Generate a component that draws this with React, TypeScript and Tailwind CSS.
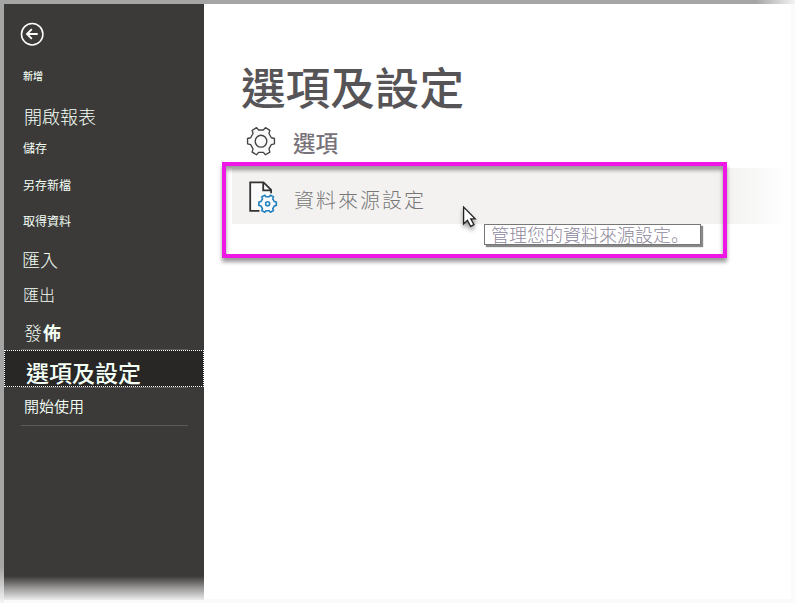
const gear =
  'M10.2 1.5 L12.2 3.7 H16.8 L18.8 1.5 L23.1 4 L22.2 7 L24.5 11 L27.5 11.7 V16.7 L24.5 17.4 L22.2 21.4 L23.1 24.4 L18.8 26.9 L16.8 24.7 H12.2 L10.2 26.9 L5.9 24.4 L6.8 21.4 L4.5 17.4 L1.5 16.7 V11.7 L4.5 11 L6.8 7 L5.9 4 Z';

function BackIcon() {
  return (
    <svg width="24" height="24" viewBox="0 0 24 24" fill="none" stroke="#fff">
      <circle cx="12.2" cy="12.2" r="10.7" strokeWidth="1.5" />
      <path d="M17.7 12H7.5M11.8 7.2L7 12l4.8 4.8" strokeWidth="1.9" />
    </svg>
  );
}

function GearIcon() {
  return (
    <svg width="30" height="31" viewBox="0 0 29 29" preserveAspectRatio="none" fill="#fafafa" stroke="#444" strokeWidth="1.3" strokeLinejoin="round">
      <path d={gear} />
      <circle cx="14.5" cy="14.2" r="5.6" />
    </svg>
  );
}

function FileGearIcon() {
  return (
    <svg width="30" height="33" viewBox="0 0 30 33" fill="none">
      <path d="M12 30.8H2.2V2.3h13.5l8 8v4.5" fill="#fafafa" />
      <path d="M11.5 30.8H2.2V2.3h13.3l7.6 7.6v3.4M15.2 2.5v7.8h8" stroke="#333" strokeWidth="1.8" />
      <g transform="translate(9.9 14.2) scale(.67)" stroke="#2080bd" strokeWidth="2.4" fill="#fafafa">
        <path d={gear} />
        <circle cx="14.5" cy="14.2" r="3" />
      </g>
    </svg>
  );
}

function Sidebar() {
  return (
    <nav className="flex h-[596px] w-[200px] shrink-0 flex-col bg-[#3b3a38] text-[#f4fff6]">
      <div className="mt-[18px] ml-4 h-6">
        <BackIcon />
      </div>
      <div className="flex flex-col pl-5 leading-6 whitespace-nowrap">
        <div className="mt-[18px] -ml-px h-6 text-[10px] font-medium">新增</div>
        <div className="mt-[16px] h-6 text-[18px] font-light">開啟報表</div>
        <div className="mt-[8px] -ml-px h-6 text-[12px]">儲存</div>
        <div className="mt-[13px] -ml-px h-6 text-[12px]">另存新檔</div>
        <div className="mt-3 -ml-px h-6 text-[12px]">取得資料</div>
        <div className="mt-[14px] -ml-0.5 h-6 text-[18px] font-light">匯入</div>
        <div className="mt-[11px] -ml-px h-6 text-[16px] font-light">匯出</div>
        <div className="mt-[14px] h-6 text-[18px] font-light">
          發<span className="ml-px font-bold">佈</span>
        </div>
      </div>
      <div className="mt-[5px] ml-[17px] h-px w-[167px] bg-[#5c5b59]" />
      <div className="h-[37px] border border-dotted border-white bg-[#282726] pl-[21px] text-[23px] leading-[42px] font-medium whitespace-nowrap">
        選項及設定
      </div>
      <div className="ml-[17px] h-px w-[167px] bg-[#5c5b59]" />
      <div className="mt-[6px] h-6 pl-5 text-[15px] leading-6 font-[350]">開始使用</div>
      <div className="mt-[7px] ml-[17px] h-px w-[167px] bg-[#5c5b59]" />
      <div className="mt-auto h-6 bg-linear-to-b from-[#3b3a38] via-[#999897] to-[#ececec]" />
    </nav>
  );
}

function Tooltip() {
  return (
    <div className="absolute top-[56px] left-[252px] h-[21px] w-[217px] border border-[#777] bg-white pl-[6px] text-[18px] leading-[18px] font-light whitespace-nowrap text-[#8d879b] shadow-[2px_2px_1px_#888]">
      管理您的資料來源設定<span className="font-['Noto_Sans_CJK_SC',sans-serif]" lang="zh-CN">。</span>
    </div>
  );
}

function Cursor() {
  return (
    <svg className="absolute top-[36px] left-[228px] drop-shadow-[0_3px_2px_rgba(0,0,0,.4)]" width="18" height="26" viewBox="0 0 18 26">
      <path d="M3.6 3v17l3.8-3.7 3.2 6.1 3.4-1.7-3.2-5.8H15.2Z" fill="#fff" stroke="#222" strokeWidth="1.3" />
    </svg>
  );
}

function Main() {
  return (
    <main className="h-[595px] w-[587px] bg-white pt-[52px]">
      <h1 className="h-[60px] pl-[37px] text-[44.6px] leading-[60px] font-medium whitespace-nowrap text-[#565457]">選項及設定</h1>
      <div className="flex h-[52px] items-start pt-[10px] pl-[42px]">
        <GearIcon />
        <span className="ml-[17px] text-[22.5px] leading-8 font-medium text-[#777279]">選項</span>
      </div>
      <div className="relative ml-7 flex h-[56px] w-[559px] items-center bg-linear-to-r from-[#f3f2f1] from-[88%] to-white pl-4">
        <FileGearIcon />
        <span className="mt-[8px] ml-4 text-[20px] leading-8 font-light tracking-[2px] text-[#777]">資料來源設定</span>
        <div className="absolute -top-[6px] -left-[10px] h-[96px] w-[505px] border-4 border-[#ee17e6] shadow-[0_4px_4px_rgba(0,0,0,.4),inset_0_4px_4px_rgba(0,0,0,.4)]" />
        <Tooltip />
        <Cursor />
      </div>
    </main>
  );
}

export default function App() {
  return (
    <div className="h-[603px] w-[795px] overflow-hidden bg-[#fafafa] font-['Noto_Sans_CJK_TC',sans-serif]" lang="zh-TW">
      <div className="h-1 bg-linear-to-r from-[#a5a5a5] from-[95%] to-[#f3f3f3]" />
      <div className="flex items-start">
        <div className="h-[599px] w-1 bg-linear-to-b from-[#a5a5a5] from-[94%] to-[#f5f5f5]" />
        <Sidebar />
        <Main />
      </div>
    </div>
  );
}
